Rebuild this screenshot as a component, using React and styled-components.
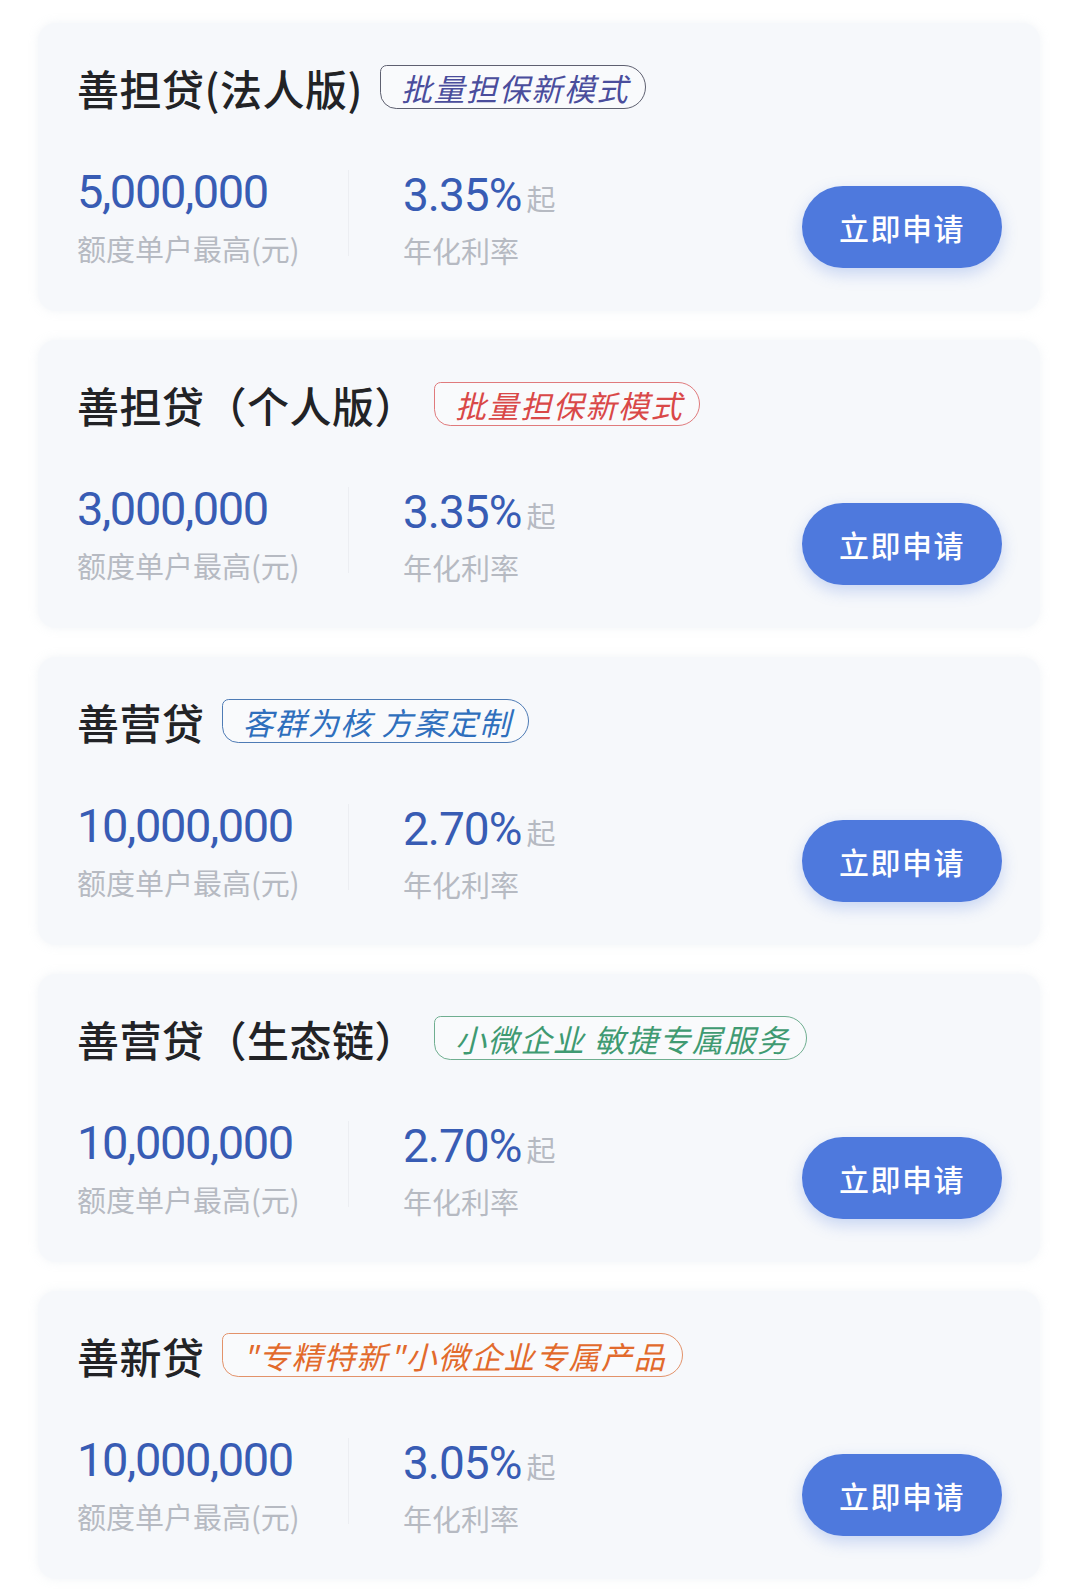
import React from "react";
import styled, { createGlobalStyle } from "styled-components";

const Global = createGlobalStyle`
  html, body { margin: 0; padding: 0; background: #ffffff; }
  body { font-family: "Noto Sans CJK SC", "Noto Sans", sans-serif; }
`;

const Page = styled.div`
  width: 1080px;
  padding: 23px 40px 20px 38px;
  box-sizing: border-box;
  display: flex;
  flex-direction: column;
  gap: 29px;
`;

const Card = styled.div`
  height: 288px;
  box-sizing: border-box;
  background: #f6f8fb;
  border-radius: 18px;
  box-shadow: 0 0 10px rgba(200, 210, 225, 0.25);
  padding: 40px 38px 0 39px;
  display: flex;
  flex-direction: column;
`;

const TitleRow = styled.div`
  display: flex;
  align-items: center;
  gap: 17px;
  height: 48px;
`;

const Title = styled.div`
  font-family: "Noto Sans CJK SC", sans-serif;
  font-size: 42px;
  font-weight: 500;
  color: #222326;
  letter-spacing: 0.5px;
  white-space: nowrap;
`;

const Tag = styled.div`
  height: 44px;
  box-sizing: border-box;
  border: 1.5px solid ${(p) => p.$border};
  color: ${(p) => p.$color};
  border-radius: 7px 23px 23px 17px;
  padding: 0 16px 0 20px;
  display: flex;
  align-items: center;
  font-family: "Noto Sans CJK SC", sans-serif;
  font-size: 31px;
  font-style: italic;
  font-weight: 400;
  letter-spacing: 1.6px;
  white-space: pre;
  background: rgba(255, 255, 255, 0.35);
`;

const StatsRow = styled.div`
  display: flex;
  align-items: flex-start;
  margin-top: 55px;
`;

const AmountCol = styled.div`
  width: 271px;
  display: flex;
  flex-direction: column;
`;

const Divider = styled.div`
  width: 1px;
  height: 86px;
  background: #eceef2;
  margin: 4px 54px 0 0;
`;

const RateCol = styled.div`
  flex: 1;
  display: flex;
  flex-direction: column;
  padding-top: 3px;
`;

const Amount = styled.div`
  font-family: Roboto, "Noto Sans", sans-serif;
  font-size: 47px;
  line-height: 52px;
  letter-spacing: -1.4px;
  color: #385cb4;
`;

const RateLine = styled.div`
  display: flex;
  align-items: baseline;
  gap: 5px;
  line-height: 52px;
`;

const Rate = styled.span`
  font-family: Roboto, "Noto Sans", sans-serif;
  font-size: 46px;
  letter-spacing: -1px;
  color: #385cb4;
`;

const From = styled.span`
  font-family: "Noto Sans CJK SC", sans-serif;
  font-size: 29px;
  color: #b6bac2;
`;

const Label = styled.div`
  font-family: "Noto Sans CJK SC", sans-serif;
  font-size: 29px;
  line-height: 40px;
  margin-top: ${(p) => (p.$tight ? "6px" : "10px")};
  color: #b6bac2;
  white-space: nowrap;
`;

const ApplyButton = styled.button`
  width: 200px;
  height: 82px;
  margin-top: 20px;
  border: none;
  border-radius: 41px;
  background: #4e79dd;
  color: #ffffff;
  font-family: "Noto Sans CJK SC", sans-serif;
  font-size: 30px;
  font-weight: 500;
  letter-spacing: 1.5px;
  box-shadow: 0 6px 16px rgba(78, 121, 221, 0.28);
  cursor: pointer;
`;

const products = [
  {
    title: "善担贷(法人版)",
    tag: "批量担保新模式",
    color: "#4a4d9c",
    border: "#5e6070",
    amount: "5,000,000",
    rate: "3.35%",
  },
  {
    title: "善担贷（个人版）",
    tag: "批量担保新模式",
    color: "#d94848",
    border: "#e07a7c",
    amount: "3,000,000",
    rate: "3.35%",
  },
  {
    title: "善营贷",
    tag: "客群为核 方案定制",
    color: "#2f6fbd",
    border: "#4e7bb5",
    amount: "10,000,000",
    rate: "2.70%",
  },
  {
    title: "善营贷（生态链）",
    tag: "小微企业 敏捷专属服务",
    color: "#3f9a72",
    border: "#6fae90",
    amount: "10,000,000",
    rate: "2.70%",
  },
  {
    title: "善新贷",
    tag: "\"专精特新\"小微企业专属产品",
    color: "#e26a2c",
    border: "#e3926a",
    amount: "10,000,000",
    rate: "3.05%",
  },
];

export default function App() {
  return (
    <>
      <Global />
      <Page>
        {products.map((p, i) => (
          <Card key={i}>
            <TitleRow>
              <Title>{p.title}</Title>
              <Tag $color={p.color} $border={p.border}>
                {p.tag}
              </Tag>
            </TitleRow>
            <StatsRow>
              <AmountCol>
                <Amount>{p.amount}</Amount>
                <Label>额度单户最高(元)</Label>
              </AmountCol>
              <Divider />
              <RateCol>
                <RateLine>
                  <Rate>{p.rate}</Rate>
                  <From>起</From>
                </RateLine>
                <Label $tight>年化利率</Label>
              </RateCol>
              <ApplyButton>立即申请</ApplyButton>
            </StatsRow>
          </Card>
        ))}
      </Page>
    </>
  );
}
